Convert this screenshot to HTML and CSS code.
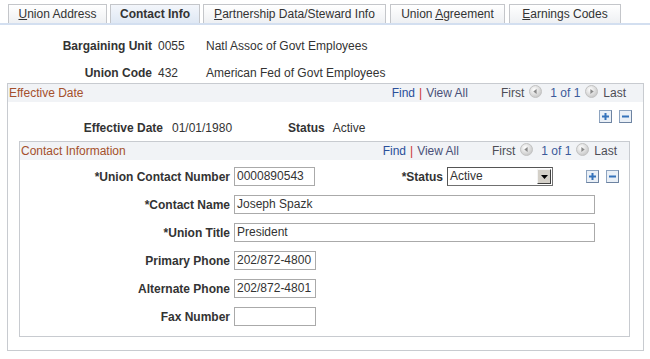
FILE: index.html
```html
<!DOCTYPE html>
<html>
<head>
<meta charset="utf-8">
<link rel="stylesheet" href="styles.css">
</head>
<body>
<div class="tabs">
  <div class="tab t1"><u>U</u>nion Address</div>
  <div class="tab t2 active">Contact Info</div>
  <div class="tab t3"><u>P</u>artnership Data/Steward Info</div>
  <div class="tab t4">Union <u>A</u>greement</div>
  <div class="tab t5"><u>E</u>arnings Codes</div>
</div>

<div class="keys">
  <div class="klbl">Bargaining Unit</div><div>0055</div><div>Natl Assoc of Govt Employees</div>
  <div class="klbl">Union Code</div><div>432</div><div>American Fed of Govt Employees</div>
</div>

<div class="box outer">
  <div class="hdr">
    <div class="title">Effective Date</div>
    <div class="nav nav-outer">
      <span class="link">Find</span><span class="sep">|</span><span class="link2">View All</span>
      <span class="first">First</span>
      <svg class="circ" width="13" height="13" viewBox="0 0 13 13"><defs><radialGradient id="g1" cx="40%" cy="35%" r="70%"><stop offset="0" stop-color="#ffffff"/><stop offset="1" stop-color="#c4c4c4"/></radialGradient></defs><circle cx="6.5" cy="6.5" r="6" fill="url(#g1)" stroke="#c2c2c2"/><path d="M4.3 6.5 L7.6 4 L7.6 9 Z" fill="#8a8a8a"/></svg>
      <span class="count">1 of 1</span>
      <svg class="circ c2" width="13" height="13" viewBox="0 0 13 13"><circle cx="6.5" cy="6.5" r="6" fill="url(#g1)" stroke="#c2c2c2"/><path d="M8.7 6.5 L5.4 4 L5.4 9 Z" fill="#8a8a8a"/></svg>
      <span class="first last">Last</span>
    </div>
  </div>
  <div class="btnrow">
    <svg class="pm" width="13" height="13" viewBox="0 0 13 13"><rect x="0.5" y="0.5" width="12" height="12" fill="#eaf0f7" stroke="#8ea4c0"/><path d="M12.5 0.5 V12.5 H0.5" fill="none" stroke="#6d83a1"/><rect x="3" y="5.5" width="7" height="2" fill="#3573bb"/><rect x="5.5" y="3" width="2" height="7" fill="#3573bb"/></svg>
    <svg class="pm" width="13" height="13" viewBox="0 0 13 13"><rect x="0.5" y="0.5" width="12" height="12" fill="#eaf0f7" stroke="#8ea4c0"/><path d="M12.5 0.5 V12.5 H0.5" fill="none" stroke="#6d83a1"/><rect x="3" y="5.5" width="7" height="2" fill="#3573bb"/></svg>
  </div>
  <div class="effrow">
    <div class="elbl">Effective Date</div>
    <div class="eval">01/01/1980</div>
    <div class="slbl">Status</div>
    <div class="sval">Active</div>
  </div>

  <div class="box inner">
    <div class="hdr">
      <div class="title">Contact Information</div>
      <div class="nav nav-inner">
        <span class="link">Find</span><span class="sep">|</span><span class="link2">View All</span>
        <span class="first">First</span>
        <svg class="circ" width="13" height="13" viewBox="0 0 13 13"><circle cx="6.5" cy="6.5" r="6" fill="url(#g1)" stroke="#c2c2c2"/><path d="M4.3 6.5 L7.6 4 L7.6 9 Z" fill="#8a8a8a"/></svg>
        <span class="count">1 of 1</span>
        <svg class="circ c2" width="13" height="13" viewBox="0 0 13 13"><circle cx="6.5" cy="6.5" r="6" fill="url(#g1)" stroke="#c2c2c2"/><path d="M8.7 6.5 L5.4 4 L5.4 9 Z" fill="#8a8a8a"/></svg>
        <span class="first last">Last</span>
      </div>
    </div>

    <div class="rows">
      <div class="row">
        <div class="lbl">*Union Contact Number</div>
        <div class="inp short">0000890543</div>
        <div class="stlbl">*Status</div>
        <div class="select"><span class="selval">Active</span><span class="selbtn"><svg width="7" height="4" viewBox="0 0 7 4"><path d="M0 0 H7 L3.5 4 Z" fill="#000"/></svg></span></div>
        <div class="pmwrap">
          <svg class="pm" width="13" height="13" viewBox="0 0 13 13"><rect x="0.5" y="0.5" width="12" height="12" fill="#eaf0f7" stroke="#8ea4c0"/><path d="M12.5 0.5 V12.5 H0.5" fill="none" stroke="#6d83a1"/><rect x="3" y="5.5" width="7" height="2" fill="#3573bb"/><rect x="5.5" y="3" width="2" height="7" fill="#3573bb"/></svg>
          <svg class="pm" width="13" height="13" viewBox="0 0 13 13"><rect x="0.5" y="0.5" width="12" height="12" fill="#eaf0f7" stroke="#8ea4c0"/><path d="M12.5 0.5 V12.5 H0.5" fill="none" stroke="#6d83a1"/><rect x="3" y="5.5" width="7" height="2" fill="#3573bb"/></svg>
        </div>
      </div>
      <div class="row">
        <div class="lbl">*Contact Name</div>
        <div class="inp long">Joseph Spazk</div>
      </div>
      <div class="row">
        <div class="lbl">*Union Title</div>
        <div class="inp long">President</div>
      </div>
      <div class="row">
        <div class="lbl">Primary Phone</div>
        <div class="inp phone">202/872-4800</div>
      </div>
      <div class="row">
        <div class="lbl">Alternate Phone</div>
        <div class="inp phone">202/872-4801</div>
      </div>
      <div class="row">
        <div class="lbl">Fax Number</div>
        <div class="inp phone"></div>
      </div>
    </div>
  </div>
</div>
</body>
</html>
```

FILE: styles.css
```css
html, body {
  margin: 0;
  padding: 0;
  background: #ffffff;
}
body {
  width: 650px;
  height: 359px;
  overflow: hidden;
  font-family: "Liberation Sans", Arial, sans-serif;
  font-size: 12px;
  color: #333333;
}

/* Tabs */
.tabs {
  display: flex;
  padding: 4px 0 0 8px;
  border-bottom: 2px solid #d3dff0;
}
.tab {
  height: 19px;
  box-sizing: border-box;
  border: 1px solid #c4c6ca;
  border-bottom: none;
  line-height: 18px;
  text-align: center;
  background: linear-gradient(#ffffff, #eef0f3);
  color: #333;
  white-space: nowrap;
  flex: none;
}
.t1 { width: 99px; }
.t2 { width: 90px; margin-left: 3px; }
.t3 { width: 183px; margin-left: 3px; }
.t4 { width: 115px; margin-left: 4px; }
.t5 { width: 112px; margin-left: 4px; }
.tab u { text-decoration: underline; }
.tab.active {
  font-weight: bold;
  background: linear-gradient(#f3f6fb, #dfe8f4);
}

/* Key fields */
.keys {
  display: grid;
  grid-template-columns: 152px 42px auto;
  column-gap: 6px;
  row-gap: 13px;
  line-height: 14px;
  padding-top: 14px;
}
.klbl {
  text-align: right;
  font-weight: bold;
}

/* Boxes */
.box {
  box-sizing: border-box;
  border: 1px solid #c8cbd0;
}
.outer {
  margin: 3px 0 0 7px;
  width: 637px;
  padding-bottom: 13px;
}
.inner {
  margin: 6px 0 0 11px;
  width: 611px;
  padding-bottom: 10px;
}
.hdr {
  display: flex;
  align-items: center;
  height: 18px;
  background: #f1f3f6;
  padding-left: 1px;
}
.title {
  color: #a4502c;
  font-size: 12px;
}
.nav {
  margin-left: auto;
  display: flex;
  align-items: center;
  white-space: nowrap;
}
.nav-outer { padding-right: 17px; }
.nav-inner { padding-right: 12px; }
.link { color: #2a4f9a; }
.sep { color: #cc3333; margin: 0 4px; }
.link2 { color: #4a5078; }
.first { color: #4d4d55; margin-left: 33px; }
.first.last { margin-left: 5px; }
.circ { margin-left: 5px; margin-top: -3px; }
.count { color: #3b5a9a; margin-left: 8px; }
.c2 { margin-left: 5px; }

/* Buttons */
.btnrow {
  display: flex;
  justify-content: flex-end;
  gap: 7px;
  height: 11px;
  margin-top: 8px;
  padding-right: 11px;
  align-items: flex-start;
}
.pm { display: block; }

/* Effective date row */
.effrow {
  display: flex;
  line-height: 14px;
}
.elbl {
  width: 155px;
  text-align: right;
  font-weight: bold;
}
.eval {
  margin-left: 9px;
  width: 116px;
}
.slbl { font-weight: bold; }
.sval { margin-left: 8px; }

/* Rows */
.rows {
  display: flex;
  flex-direction: column;
  gap: 9px;
  padding-top: 7px;
}
.row {
  display: flex;
  align-items: center;
  height: 19px;
}
.lbl {
  width: 210px;
  text-align: right;
  font-weight: bold;
  margin-right: 4px;
  white-space: nowrap;
}
.inp {
  box-sizing: border-box;
  height: 19px;
  border: 1px solid #aaaaaa;
  padding-left: 2px;
  line-height: 17px;
  background: #fff;
  color: #333;
}
.short { width: 81px; }
.phone { width: 82px; }
.long { width: 361px; }
.stlbl {
  width: 128px;
  text-align: right;
  font-weight: bold;
  margin-right: 4px;
}
.select {
  box-sizing: border-box;
  width: 106px;
  height: 19px;
  border: 1px solid #707070;
  border-top-color: #555;
  border-left-color: #555;
  display: flex;
  align-items: stretch;
  background: #fff;
}
.selval {
  flex: 1;
  padding-left: 2px;
  line-height: 17px;
}
.selbtn {
  width: 14px;
  box-sizing: border-box;
  margin: 1px;
  background: #d4d0c8;
  border: 1px solid;
  border-color: #f4f4f4 #404040 #404040 #f4f4f4;
  display: flex;
  align-items: center;
  justify-content: center;
}
.pmwrap {
  margin-left: auto;
  display: flex;
  gap: 7px;
  padding-right: 10px;
}
```
